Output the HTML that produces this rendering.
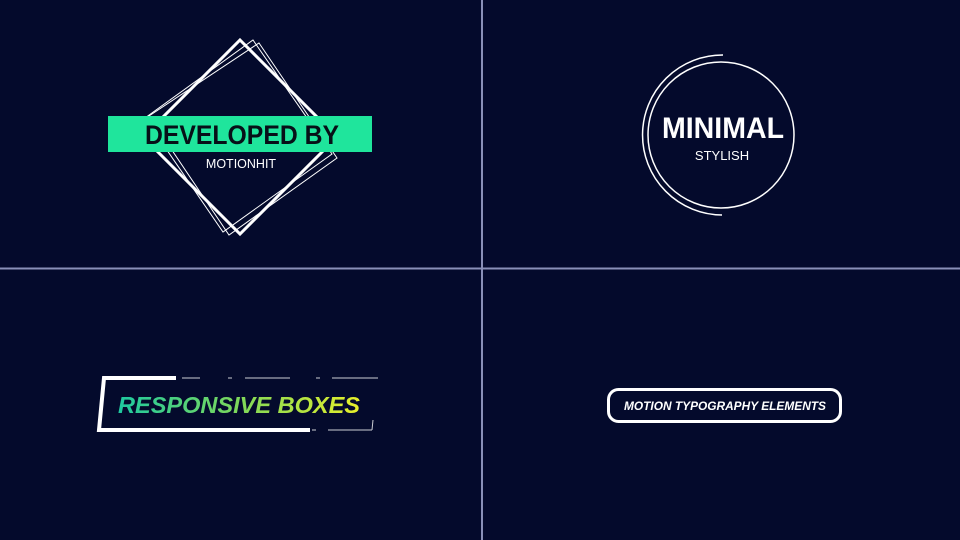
<!DOCTYPE html>
<html><head><style>
html,body{margin:0;padding:0;}
body{width:960px;height:540px;background:#040a2c;position:relative;overflow:hidden;font-family:"Liberation Sans",sans-serif;}
</style></head><body>
<svg width="960" height="540" style="position:absolute;left:0;top:0">
<defs>
<linearGradient id="g" x1="0" x2="1" y1="0" y2="0">
<stop offset="0" stop-color="#1ec9a0"/><stop offset="0.5" stop-color="#7ed85a"/><stop offset="1" stop-color="#e8f02a"/>
</linearGradient>
</defs>
<rect x="481" y="0" width="2" height="540" fill="#8a90b8"/>
<rect x="0" y="267.5" width="960" height="2" fill="#8a90b8"/>

<!-- diamonds -->
<g fill="none" stroke="#fff">
<polygon points="253,40 332,154 223,232 145,118" stroke-width="1"/>
<polygon points="259,43 337,158 229,235 149,116" stroke-width="1"/>
<polygon points="240,40 337,137 240,234 143,137" stroke-width="3"/>
</g>
<rect x="108" y="116" width="264" height="36" fill="#1fe59c"/>
<text x="242" y="144" text-anchor="middle" font-size="27" font-weight="bold" fill="#071018" textLength="194" lengthAdjust="spacingAndGlyphs">DEVELOPED BY</text>
<text x="241" y="168" text-anchor="middle" font-size="12.5" fill="#fff">MOTIONHIT</text>

<!-- circle -->
<circle cx="721" cy="135" r="73" fill="none" stroke="#fff" stroke-width="1.5"/>
<path d="M723,55 A80,80 0 0 0 722,215" fill="none" stroke="#fff" stroke-width="1.5"/>
<text x="723" y="138" text-anchor="middle" font-size="30" font-weight="bold" fill="#fff" textLength="122" lengthAdjust="spacingAndGlyphs">MINIMAL</text>
<text x="722" y="160" text-anchor="middle" font-size="13" fill="#fff">STYLISH</text>

<!-- responsive -->
<path d="M176,378 L104,378 L99,430 L310,430" fill="none" stroke="#fff" stroke-width="4"/>
<g stroke="#fff" stroke-width="1" opacity="0.8">
<line x1="182" y1="378" x2="200" y2="378"/><line x1="228" y1="378" x2="232" y2="378"/><line x1="245" y1="378" x2="290" y2="378"/><line x1="316" y1="378" x2="320" y2="378"/><line x1="332" y1="378" x2="378" y2="378"/>
<line x1="312" y1="430" x2="316" y2="430"/><line x1="328" y1="430" x2="372" y2="430"/><line x1="373" y1="420" x2="372" y2="430"/>
</g>
<text x="118" y="413" font-size="23" font-weight="bold" font-style="italic" fill="url(#g)" textLength="242" lengthAdjust="spacingAndGlyphs">RESPONSIVE BOXES</text>

<!-- pill -->
<rect x="608.5" y="389.5" width="232" height="32" rx="10" fill="none" stroke="#fff" stroke-width="3"/>
<text x="725" y="410" text-anchor="middle" font-size="11.5" font-weight="bold" font-style="italic" fill="#fff" textLength="202" lengthAdjust="spacingAndGlyphs">MOTION TYPOGRAPHY ELEMENTS</text>
</svg>
</body></html>
